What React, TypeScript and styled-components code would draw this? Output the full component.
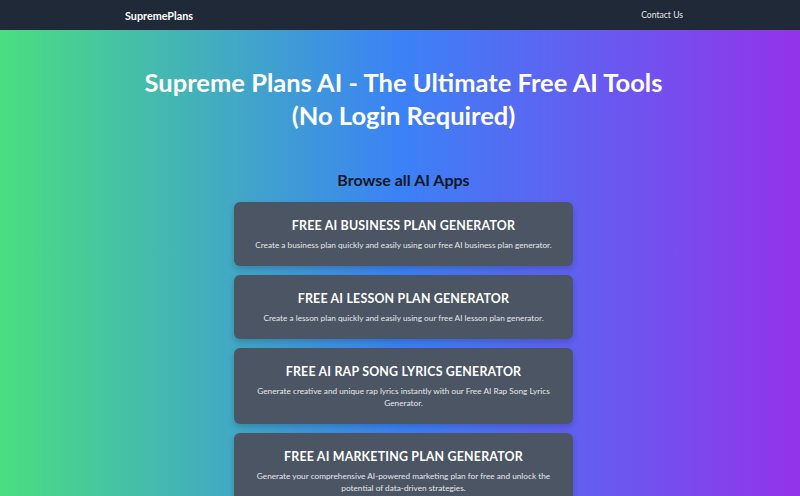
import styled, { createGlobalStyle } from "styled-components";

type App = {
  title: string;
  description: string;
};

const apps: App[] = [
  {
    title: "Free AI Business Plan Generator",
    description:
      "Create a business plan quickly and easily using our free AI business plan generator.",
  },
  {
    title: "Free AI Lesson Plan Generator",
    description:
      "Create a lesson plan quickly and easily using our free AI lesson plan generator.",
  },
  {
    title: "Free AI Rap Song Lyrics Generator",
    description:
      "Generate creative and unique rap lyrics instantly with our Free AI Rap Song Lyrics Generator.",
  },
  {
    title: "Free AI Marketing Plan Generator",
    description:
      "Generate your comprehensive AI-powered marketing plan for free and unlock the potential of data-driven strategies.",
  },
];

export default function AppPage() {
  return (
    <>
      <GlobalStyle />
      <Nav>
        <NavInner>
          <Brand href="#">SupremePlans</Brand>
          <NavLink href="#">Contact Us</NavLink>
        </NavInner>
      </Nav>

      <Main>
        <Hero>
          Supreme Plans AI - The Ultimate Free AI Tools
          <br />
          (No Login Required)
        </Hero>

        <SectionTitle>Browse all AI Apps</SectionTitle>

        <CardList>
          {apps.map((app) => (
            <Card key={app.title} href="#">
              <CardTitle>{app.title}</CardTitle>
              <CardText>{app.description}</CardText>
            </Card>
          ))}
        </CardList>
      </Main>
    </>
  );
}

const GlobalStyle = createGlobalStyle`
  html, body {
    margin: 0;
    padding: 0;
    height: 100%;
    overflow: hidden;
  }
  body {
    font-family: Lato, "Noto Sans", sans-serif;
    background: #1f2937;
  }
  #root {
    min-height: 100%;
    display: flex;
    flex-direction: column;
  }
`;

const Nav = styled.nav`
  background: #1f2937;
  height: 30px;
  flex-shrink: 0;
`;

const NavInner = styled.div`
  height: 100%;
  display: flex;
  align-items: center;
  justify-content: space-between;
  padding: 0 117px 0 125px;
`;

const Brand = styled.a`
  color: #fff;
  font-weight: 700;
  font-size: 10.8px;
  text-decoration: none;
`;

const NavLink = styled.a`
  color: #e5e7eb;
  font-size: 8.6px;
  text-decoration: none;
`;

const Main = styled.main`
  flex: 1;
  background: linear-gradient(to right, #4ade80, #3b82f6, #9333ea);
  display: flex;
  flex-direction: column;
  align-items: center;
  padding: 36px 0 0 7px;
`;

const Hero = styled.h1`
  margin: 0;
  color: #fff;
  font-size: 25.5px;
  font-weight: 700;
  line-height: 33px;
  text-align: center;
`;

const SectionTitle = styled.h2`
  margin: 37px 0 0;
  color: #111827;
  font-size: 16px;
  font-weight: 700;
  line-height: 22px;
`;

const CardList = styled.div`
  margin-top: 11px;
  width: 339px;
  display: flex;
  flex-direction: column;
  gap: 9px;
`;

const Card = styled.a`
  display: block;
  background: #4b5563;
  border-radius: 6px;
  box-shadow: 0 3px 6px rgba(0, 0, 0, 0.18);
  padding: 15px 16px 15px;
  text-align: center;
  text-decoration: none;
`;

const CardTitle = styled.h3`
  margin: 0;
  color: #fff;
  font-size: 12.4px;
  font-weight: 700;
  letter-spacing: 0.2px;
  line-height: 18px;
  text-transform: uppercase;
`;

const CardText = styled.p`
  margin: 4px 0 0;
  color: #e5e7eb;
  font-size: 8.25px;
  line-height: 12px;
`;
